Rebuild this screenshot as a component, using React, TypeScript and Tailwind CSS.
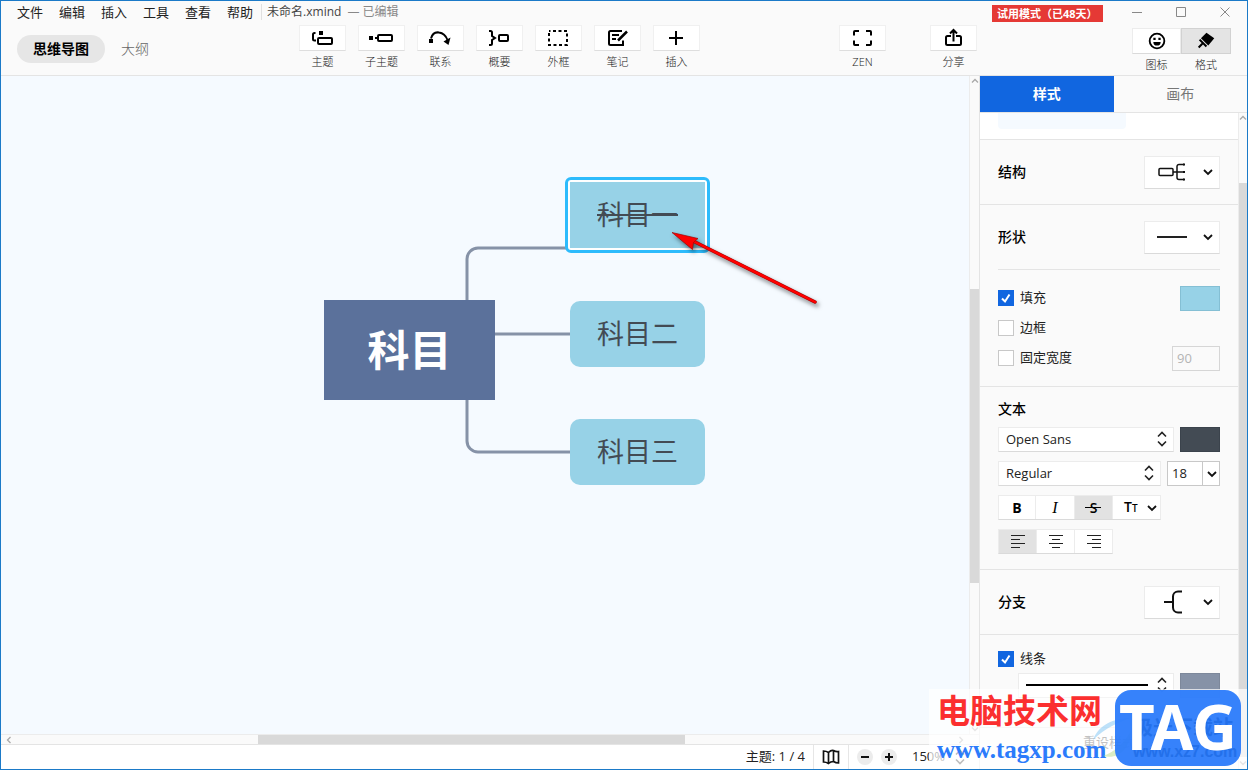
import { useState } from 'react';
import type { ReactNode } from 'react';

const MENU = ['文件', '编辑', '插入', '工具', '查看', '帮助'];

function Icon({ children, size = 24 }: { children: ReactNode; size?: number }) {
  return (
    <svg
      width={size}
      height={size}
      viewBox="0 0 24 24"
      fill="none"
      stroke="currentColor"
      strokeWidth={2}
      aria-hidden="true"
    >
      {children}
    </svg>
  );
}

const TOOLS: { label: string; icon: ReactNode }[] = [
  {
    label: '主题',
    icon: (
      <>
        <path d="M5.500 7H4.500A1.500 1.500 0 0 0 3 8.500V13a1.500 1.500 0 0 0 1.500 1.500H6" />
        <rect x="8" y="12" width="14" height="6" rx="1" />
        <path d="M9 5h4v4H9z" fill="currentColor" stroke="none" />
      </>
    ),
  },
  {
    label: '子主题',
    icon: (
      <>
        <path d="M0 10h4v4H0z" fill="currentColor" stroke="none" />
        <path d="M6 12h3" />
        <rect x="9" y="9" width="14" height="6" rx="1" />
      </>
    ),
  },
  {
    label: '联系',
    icon: (
      <>
        <path d="M3 12.500C4.500 7 8 6 11 6.500c4.500.5 7 3.500 8.500 7.500" />
        <path d="M1 13h4v4H1z" fill="currentColor" stroke="none" />
        <path d="M15.500 15.500l7-4-2 7.500z" fill="currentColor" stroke="none" />
      </>
    ),
  },
  {
    label: '概要',
    icon: (
      <>
        <path d="M2 5h1.500A1.500 1.500 0 0 1 5 6.500V10l3 2-3 2v3.500A1.500 1.500 0 0 1 3.500 19H2" />
        <rect x="12" y="9" width="9" height="6" rx="1" />
      </>
    ),
  },
  {
    label: '外框',
    icon: <rect x="3" y="5" width="18" height="14" strokeDasharray="3 2.500" strokeDashoffset="1.500" />,
  },
  {
    label: '笔记',
    icon: (
      <>
        <path d="M17 5H5.500A1.500 1.500 0 0 0 4 6.500v11A1.500 1.500 0 0 0 5.500 19H18v-4.500" />
        <path d="M7 9h7M7 13h4" />
        <path d="M13 14.500l9-9" strokeWidth={2.500} />
      </>
    ),
  },
  { label: '插入', icon: <path d="M12 5v14M5 12h14" /> },
];

function ToolButton({ label, children }: { label: string; children: ReactNode }) {
  return (
    <button type="button" className="flex w-[47px] flex-col items-center">
      <span className="flex h-[26px] w-full items-center justify-center border border-[#f0f0f0] border-b-[#dedede] bg-white pr-px">
        <Icon>{children}</Icon>
      </span>
      <span className="mt-1 whitespace-nowrap text-[11px] font-light leading-[14px] text-[#222]">{label}</span>
    </button>
  );
}

function ChevronDown() {
  return (
    <svg width="10" height="8" viewBox="0 0 10 8" fill="none" stroke="#111" strokeWidth="1.800" aria-hidden="true">
      <path d="M1 2l4 4 4-4" />
    </svg>
  );
}

function UpDown({ className = '' }: { className?: string }) {
  return (
    <svg
      width="10"
      height="16"
      viewBox="0 0 10 16"
      fill="none"
      stroke="#222"
      strokeWidth="1.600"
      className={`pointer-events-none ${className}`}
      aria-hidden="true"
    >
      <path d="M1 5.500l4-4 4 4M1 10.500l4 4 4-4" />
    </svg>
  );
}

function ScrollArrow({ d, className = '' }: { d: string; className?: string }) {
  return (
    <svg
      width="8"
      height="8"
      viewBox="0 0 8 8"
      fill="none"
      stroke="#a8a8a8"
      strokeWidth="1.300"
      className={`shrink-0 ${className}`}
      aria-hidden="true"
    >
      <path d={d} />
    </svg>
  );
}

const UP = 'M1 5.500l3-3 3 3';
const DOWN = 'M1 2.500l3 3 3-3';
const LEFT = 'M5.500 1l-3 3 3 3';
const RIGHT = 'M2.500 1l3 3-3 3';

function DropRow({ title, children }: { title: string; children: ReactNode }) {
  return (
    <div className="flex h-16 items-center justify-between">
      <h2 className="text-sm font-medium text-black">{title}</h2>
      <button
        type="button"
        aria-label={title}
        className="flex h-[33px] w-[76px] items-center justify-between border border-[#ececec] border-b-[#dadada] bg-white pl-3 pr-1.5"
      >
        {children}
        <ChevronDown />
      </button>
    </div>
  );
}

function Check({ label, defaultChecked = false }: { label: string; defaultChecked?: boolean }) {
  return (
    <label className="flex items-center gap-1.5 text-[13px] text-[#222]">
      <span className="relative flex h-4 w-4">
        <input
          type="checkbox"
          defaultChecked={defaultChecked}
          className="peer h-4 w-4 appearance-none border border-[#c8c8c8] bg-white checked:border-[#1166e0] checked:bg-[#1166e0]"
        />
        <svg
          viewBox="0 0 16 16"
          fill="none"
          stroke="#fff"
          strokeWidth="2"
          className="pointer-events-none absolute inset-0 hidden h-4 w-4 peer-checked:block"
          aria-hidden="true"
        >
          <path d="M4 8.500l3 3 4.500-7" />
        </svg>
      </span>
      {label}
    </label>
  );
}

function PanelSelect({ label, value, className }: { label: string; value: string; className: string }) {
  return (
    <div className={`relative ${className}`}>
      <select
        aria-label={label}
        className="block h-[25px] w-full appearance-none border border-[#ececec] border-b-[#dadada] bg-white pl-[7px] text-[13px] text-[#222]"
      >
        <option>{value}</option>
      </select>
      <UpDown className="absolute right-[7px] top-1" />
    </div>
  );
}

function Header() {
  return (
    <header className="shrink-0 border-b border-[#e4e4e4]">
      <div className="flex h-6 items-center justify-between">
        <nav className="flex items-center pb-0.5 pl-4">
          <div className="flex gap-4">
            {MENU.map((m) => (
              <button key={m} type="button" className="text-[13px] leading-5 text-[#222]">
                {m}
              </button>
            ))}
          </div>
          <div className="ml-2 flex gap-1.5 border-l border-[#e0e0e0] pl-[5px] text-xs text-[#444]">
            <span>未命名.xmind</span>
            <span className="text-[#888]">— 已编辑</span>
          </div>
        </nav>
        <div className="flex items-center">
          <span className="mr-[29px] h-[17px] w-[111px] whitespace-nowrap bg-[#e53935] pl-[5px] text-[11px] font-bold leading-[17px] text-white">
            试用模式（已48天）
          </span>
          <div className="flex gap-[34px] pb-0.5 pr-[17px] text-[#888]">
            <button type="button" aria-label="最小化">
              <svg width="10" height="10" stroke="currentColor"><path d="M0 5.500h10" /></svg>
            </button>
            <button type="button" aria-label="最大化">
              <svg width="10" height="10" stroke="currentColor" fill="none"><path d="M.5.5h9v9h-9z" /></svg>
            </button>
            <button type="button" aria-label="关闭">
              <svg width="10" height="10" stroke="currentColor"><path d="M.5.5l9 9M9.500.5l-9 9" /></svg>
            </button>
          </div>
        </div>
      </div>

      <div className="flex h-[50px] items-start">
        <div className="flex w-[298px] shrink-0 items-center pl-4 pt-[10px]">
          <button type="button" className="h-7 w-[88px] rounded-full bg-[#e6e6e6] text-sm font-bold text-black">
            思维导图
          </button>
          <button type="button" className="ml-4 text-sm font-light text-[#666]">
            大纲
          </button>
        </div>
        <div className="flex gap-3">
          {TOOLS.map((t) => (
            <ToolButton key={t.label} label={t.label}>
              {t.icon}
            </ToolButton>
          ))}
        </div>
        <div className="ml-auto mr-[155px] flex gap-11">
          <ToolButton label="ZEN">
            <path d="M4 9.500V6a1 1 0 0 1 1-1h4M16 5h4a1 1 0 0 1 1 1v3.500M21 14.500V18a1 1 0 0 1-1 1h-4M9 19H5a1 1 0 0 1-1-1v-3.500" />
          </ToolButton>
          <ToolButton label="分享">
            <path d="M10 10H6.500A1.500 1.500 0 0 0 5 11.500v6A1.500 1.500 0 0 0 6.500 19h12a1.500 1.500 0 0 0 1.500-1.500v-6a1.500 1.500 0 0 0-1.500-1.500H15M12.500 15.500V4M9 7.500L12.500 4 16 7.500" />
          </ToolButton>
        </div>
        <div className="mr-4 flex pt-[3px]">
          <button type="button" className="flex w-[49px] flex-col items-center">
            <span className="flex h-[26px] w-full items-center justify-center border border-[#ececec] border-b-[#dadada] bg-white">
              <Icon size={22}>
                <circle cx="12" cy="12" r="8" />
                <path d="M8 13h8a4 4 0 0 1-8 0z" fill="currentColor" stroke="none" />
                <path d="M8 8.500h2.500v2.500H8zM13.500 8.500H16v2.500h-2.500z" fill="currentColor" stroke="none" />
              </Icon>
            </span>
            <span className="mt-1 text-[11px] font-light leading-[14px] text-[#222]">图标</span>
          </button>
          <button type="button" className="flex w-[50px] flex-col items-center">
            <span className="flex h-[26px] w-full items-center justify-center border border-[#d2d2d2] bg-[#e4e4e4]">
              <Icon size={22}>
                <path d="M12.500 3l8.500 6-6.500 8-8-8z" fill="currentColor" stroke="none" />
                <path d="M5 10.500l7.500 7.500M9 14l-5 5" strokeWidth={2.200} />
              </Icon>
            </span>
            <span className="mt-1 text-[11px] font-light leading-[14px] text-[#222]">格式</span>
          </button>
        </div>
      </div>
    </header>
  );
}

function Canvas() {
  return (
    <div className="relative min-w-0 flex-1 overflow-hidden bg-[#f5faff]">
      {/* branch lines */}
      <svg className="absolute left-0 top-0" width="800" height="500" fill="none" stroke="#8692a7" strokeWidth="3">
        <path d="M569 172H477a11 11 0 0 0-11 11V224M494 258h75M466 324v41a11 11 0 0 0 11 11h92" />
      </svg>
      <div className="absolute left-[323px] top-[224px] flex h-[100px] w-[171px] items-center justify-center bg-[#5b719b] pb-0.5 text-[42px] font-bold text-white">
        科目
      </div>
      {/* selected topic */}
      <div className="absolute left-[564px] top-[101px] h-[76px] w-[145px] rounded-md border-[3px] border-[#2dbbfc] bg-white p-[2px]">
        <div className="flex h-full items-center justify-center bg-[#97d2e7] text-[27px] text-[#434b54] line-through decoration-2">
          科目一
        </div>
      </div>
      <div className="absolute left-[569px] top-[225px] flex h-[66px] w-[135px] items-center justify-center rounded-[10px] bg-[#97d2e7] text-[27px] text-[#434b54]">
        科目二
      </div>
      <div className="absolute left-[569px] top-[343px] flex h-[66px] w-[135px] items-center justify-center rounded-[10px] bg-[#97d2e7] text-[27px] text-[#434b54]">
        科目三
      </div>
      <svg className="absolute left-[660px] top-[146px] drop-shadow-[2px_3px_2px_rgba(0,0,0,0.5)]" width="170" height="100">
        <path d="M33 19.500L154 80" stroke="#a00000" strokeWidth="3.500" strokeLinecap="round" />
        <path d="M33 19.500L154 80" stroke="#f00" strokeWidth="2.500" strokeLinecap="round" />
        <path d="M11 10.500l26 6-4.500 4-1 7z" fill="#f00" stroke="#a00000" strokeWidth=".7" />
      </svg>
    </div>
  );
}

function StatusBar() {
  return (
    <footer className="flex h-[25px] shrink-0 items-stretch justify-end border-t border-[#e4e4e4] bg-white text-[13px] text-[#222]">
      <span className="flex items-center pr-2">主题: 1 / 4</span>
      <button type="button" aria-label="导航图" className="flex w-9 items-center justify-center border-x border-[#e6e6e6]">
        <svg width="18" height="16" viewBox="0 0 18 16" fill="none" stroke="#111" strokeWidth="1.700" aria-hidden="true">
          <path d="M1.500 2c2.500 0 3.500.5 5 1.500C8 2 10 1 11.500 1.500c1.500.8 3 1.500 5 1v11.500c-2 0-3.500-.5-5-1.500-1.500 0-3.500.5-5 2-1.500-1-3-1.500-5-1.500zM6.500 3.500v11M11.500 1.500v11" />
        </svg>
      </button>
      <div className="flex items-center gap-2 pl-2">
        <button type="button" aria-label="缩小" className="flex h-4 w-4 items-center justify-center rounded-full bg-[#ececec]">
          <svg width="8" height="8" stroke="#111" strokeWidth="2"><path d="M0 4h8" /></svg>
        </button>
        <button type="button" aria-label="放大" className="flex h-4 w-4 items-center justify-center rounded-full bg-[#ececec]">
          <svg width="8" height="8" stroke="#111" strokeWidth="2"><path d="M0 4h8M4 0v8" /></svg>
        </button>
      </div>
      <div className="relative ml-[15px] mr-3.5 flex w-[53px] items-center">
        <select aria-label="缩放" className="w-full appearance-none bg-transparent text-[13px]">
          <option>150%</option>
        </select>
        <UpDown className="absolute right-0 top-1" />
      </div>
    </footer>
  );
}

const ALIGN_LINES = {
  左对齐: 'M1 1.500h14M1 5.500h9M1 9.500h14M1 13.500h9',
  居中: 'M1 1.500h14M4 5.500h8M1 9.500h14M4 13.500h8',
  右对齐: 'M1 1.500h14M6 5.500h9M1 9.500h14M6 13.500h9',
};

function StylePanel() {
  return (
    <div className="min-w-0 flex-1 overflow-hidden text-[#222]">
      <div className="h-[27px] border-b border-[#e4e4e4] bg-white px-[18px]">
        <div className="h-4 w-32 rounded-b bg-[#f5faff]" />
      </div>

      <section className="border-b border-[#e4e4e4] px-[18px]">
        <DropRow title="结构">
          <svg width="30" height="20" viewBox="0 0 30 20" fill="none" stroke="#111" strokeWidth="1.500" aria-hidden="true">
            <rect x="2" y="6.500" width="14" height="7" rx="1" />
            <path d="M16 10h11M27 2.500h-5a2 2 0 0 0-2 2v11a2 2 0 0 0 2 2h5" />
            <path d="M26 1.500h2v2h-2zM26 9h2v2h-2zM26 16.500h2v2h-2z" fill="#111" stroke="none" />
          </svg>
        </DropRow>
      </section>

      <section className="border-b border-[#e4e4e4] px-[18px]">
        <DropRow title="形状">
          <svg width="30" height="20" stroke="#222" strokeWidth="2" aria-hidden="true">
            <path d="M0 10h30" />
          </svg>
        </DropRow>
        <div className="border-t border-[#e4e4e4] py-[13px]">
          <div className="flex h-[30px] items-center justify-between">
            <Check label="填充" defaultChecked />
            <button type="button" aria-label="填充颜色" className="h-[25px] w-10 border border-[#84bfd4] bg-[#97d2e7]" />
          </div>
          <div className="flex h-[30px] items-center">
            <Check label="边框" />
          </div>
          <div className="flex h-[30px] items-center justify-between">
            <Check label="固定宽度" />
            <input
              type="text"
              aria-label="宽度"
              defaultValue="90"
              disabled
              className="h-[25px] w-12 border border-[#d6d6d6] bg-[#fafafa] pl-1 text-[13px] text-[#b4b4b4]"
            />
          </div>
        </div>
      </section>

      <section className="flex flex-col gap-[9px] border-b border-[#e4e4e4] px-[18px] pb-[15px] pt-[13px]">
        <h2 className="text-sm font-medium leading-[18px] text-black">文本</h2>
        <div className="flex justify-between">
          <PanelSelect label="字体" value="Open Sans" className="w-[176px]" />
          <button type="button" aria-label="文本颜色" className="h-[25px] w-10 border border-[#3b434c] bg-[#434b54]" />
        </div>
        <div className="flex justify-between">
          <PanelSelect label="字重" value="Regular" className="w-[163px]" />
          <div className="relative w-[53px]">
            <select
              aria-label="字号"
              className="block h-[25px] w-full appearance-none border border-[#c8c8c8] bg-white pl-1 text-[13px]"
            >
              <option>18</option>
            </select>
            <span className="pointer-events-none absolute inset-y-0 right-0 flex w-[18px] items-center justify-center border-l border-[#c8c8c8]">
              <ChevronDown />
            </span>
          </div>
        </div>
        <div className="flex h-[25px] w-[163px] divide-x divide-[#ececec] border border-[#ececec] border-b-[#dadada] bg-white text-sm leading-[23px] text-black">
          <button type="button" aria-label="粗体" className="w-[37px] font-bold">B</button>
          <button type="button" aria-label="斜体" className="w-[39px] font-['Liberation_Serif'] text-base italic">I</button>
          <button type="button" aria-label="删除线" className="relative w-[38px] bg-[#e2e2e2] font-semibold">
            S
            <span className="absolute left-[10px] top-[11px] h-px w-4 bg-black" />
          </button>
          <button type="button" aria-label="大小写" className="flex flex-1 items-center justify-between pl-[11px] pr-[3px] font-semibold">
            <span>T<span className="text-[10px]">T</span></span>
            <ChevronDown />
          </button>
        </div>
        <div className="flex h-[25px] w-[115px] divide-x divide-[#ececec] border border-[#ececec] border-b-[#dadada] bg-white">
          {Object.entries(ALIGN_LINES).map(([name, d]) => (
            <button
              key={name}
              type="button"
              aria-label={name}
              className={`flex flex-1 items-center justify-center ${name === '左对齐' ? 'bg-[#e2e2e2]' : ''}`}
            >
              <svg width="16" height="15" viewBox="0 0 16 15" stroke="#222" strokeWidth="1.200" aria-hidden="true">
                <path d={d} />
              </svg>
            </button>
          ))}
        </div>
      </section>

      <section className="border-b border-[#e4e4e4] px-[18px]">
        <DropRow title="分支">
          <svg width="30" height="24" viewBox="0 0 30 24" fill="none" stroke="#111" strokeWidth="2" aria-hidden="true">
            <path d="M7 12h9M25 1.500h-4a5 5 0 0 0-5 5v11a5 5 0 0 0 5 5h4" />
          </svg>
        </DropRow>
      </section>

      <section className="px-[18px] pt-[9px]">
        <div className="flex h-[29px] items-center">
          <Check label="线条" defaultChecked />
        </div>
        <div className="flex justify-end gap-1.5">
          <div className="relative w-[156px]">
            <select
              aria-label="线条样式"
              className="block h-[25px] w-full appearance-none border border-[#ececec] border-b-[#dadada] bg-white"
            />
            <span className="pointer-events-none absolute left-2 top-[11px] h-0.5 w-[122px] bg-black" />
            <UpDown className="absolute right-[7px] top-1" />
          </div>
          <button type="button" aria-label="线条颜色" className="h-[25px] w-10 border border-[#7d889b] bg-[#8692a7]" />
        </div>
      </section>
    </div>
  );
}

function SidePanel() {
  const [tab, setTab] = useState('样式');

  return (
    <aside className="flex w-[268px] shrink-0 flex-col border-l border-[#e4e4e4]">
      <div className="flex h-[37px] shrink-0 border-b border-[#e4e4e4] text-sm">
        {['样式', '画布'].map((t) => (
          <button
            key={t}
            type="button"
            onClick={() => setTab(t)}
            className={`flex-1 ${t === tab ? 'bg-[#1166e0] font-bold text-white' : 'text-[#777]'}`}
          >
            {t}
          </button>
        ))}
      </div>
      <div className="flex min-h-0 flex-1">
        <div className="flex min-w-0 flex-1 flex-col">
          <StylePanel />
          <div className="flex h-[42px] shrink-0 items-center justify-center border-t border-[#e4e4e4] pb-3">
            <button type="button" className="text-[13px] text-[#333]">重设样式</button>
          </div>
        </div>
        <div className="flex w-[9px] shrink-0 flex-col items-center border-l border-[#ececec]">
          <div className="flex h-[70px] pt-px"><ScrollArrow d={UP} /></div>
          <div className="w-full flex-1 bg-[#d9d9d9]" />
          <div className="flex h-3 items-center"><ScrollArrow d={DOWN} /></div>
        </div>
      </div>
    </aside>
  );
}

function Watermark() {
  return (
    <div className="pointer-events-none absolute bottom-0 right-0 flex h-20 w-[318px] items-start bg-white/70 pl-2 pt-px">
      <div className="w-[178px] shrink-0 whitespace-nowrap">
        <div className="text-[33px] font-bold leading-[42px] text-[#fb2f2f]">电脑技术网</div>
        <div className="font-['Liberation_Serif'] text-[25px] font-bold leading-9 text-[#2b7bfb]">www.tagxp.com</div>
      </div>
      <svg className="absolute bottom-[7px] left-[162px]" width="44" height="46" viewBox="0 0 44 46" aria-hidden="true">
        <path d="M2 24C8 8 24 2 40 2 28 6 14 12 2 24z" fill="#7cc4f4" opacity=".5" />
        <path d="M12 40c12-4 22-14 28-26 0 18-12 30-28 26z" fill="#b5dc8a" opacity=".5" />
      </svg>
      <div className="relative flex h-[76px] w-[126px] items-center justify-center rounded-2xl bg-[#2b7bfb]/95 pb-1">
        <div className="absolute left-[18px] top-[26px] whitespace-nowrap text-[#2370ea]">
          <div className="text-xl font-bold leading-6">极光下载站</div>
          <div className="font-['Liberation_Sans'] text-base font-bold leading-6">www.xz7.com</div>
        </div>
        <span className="relative font-['Noto_Sans'] text-[62px] font-bold leading-none text-white">TAG</span>
      </div>
    </div>
  );
}

export default function App() {
  return (
    <div className="relative flex h-screen w-full flex-col overflow-hidden border border-[#1b7ac8] bg-[#fafafa] font-['Open_Sans','Noto_Sans_CJK_SC',sans-serif]">
      <Header />
      <div className="flex min-h-0 flex-1">
        <main className="flex min-w-0 flex-1 flex-col">
          <div className="flex min-h-0 flex-1">
            <Canvas />
            <div className="flex w-[10px] shrink-0 flex-col items-center border-l border-[#ececec]">
              <div className="flex flex-[213]"><ScrollArrow d={UP} className="mt-px" /></div>
              <div className="w-full flex-[294] bg-[#d9d9d9]" />
              <div className="flex flex-[151] items-end"><ScrollArrow d={DOWN} className="mb-px" /></div>
            </div>
          </div>
          <div className="flex h-[10px] shrink-0 items-center border-t border-[#ececec] pr-[10px]">
            <div className="flex flex-[257]"><ScrollArrow d={LEFT} className="ml-1" /></div>
            <div className="h-full flex-[427] bg-[#d9d9d9]" />
            <div className="flex flex-[284] justify-end"><ScrollArrow d={RIGHT} className="mr-1" /></div>
          </div>
          <StatusBar />
        </main>
        <SidePanel />
      </div>
      <Watermark />
    </div>
  );
}
